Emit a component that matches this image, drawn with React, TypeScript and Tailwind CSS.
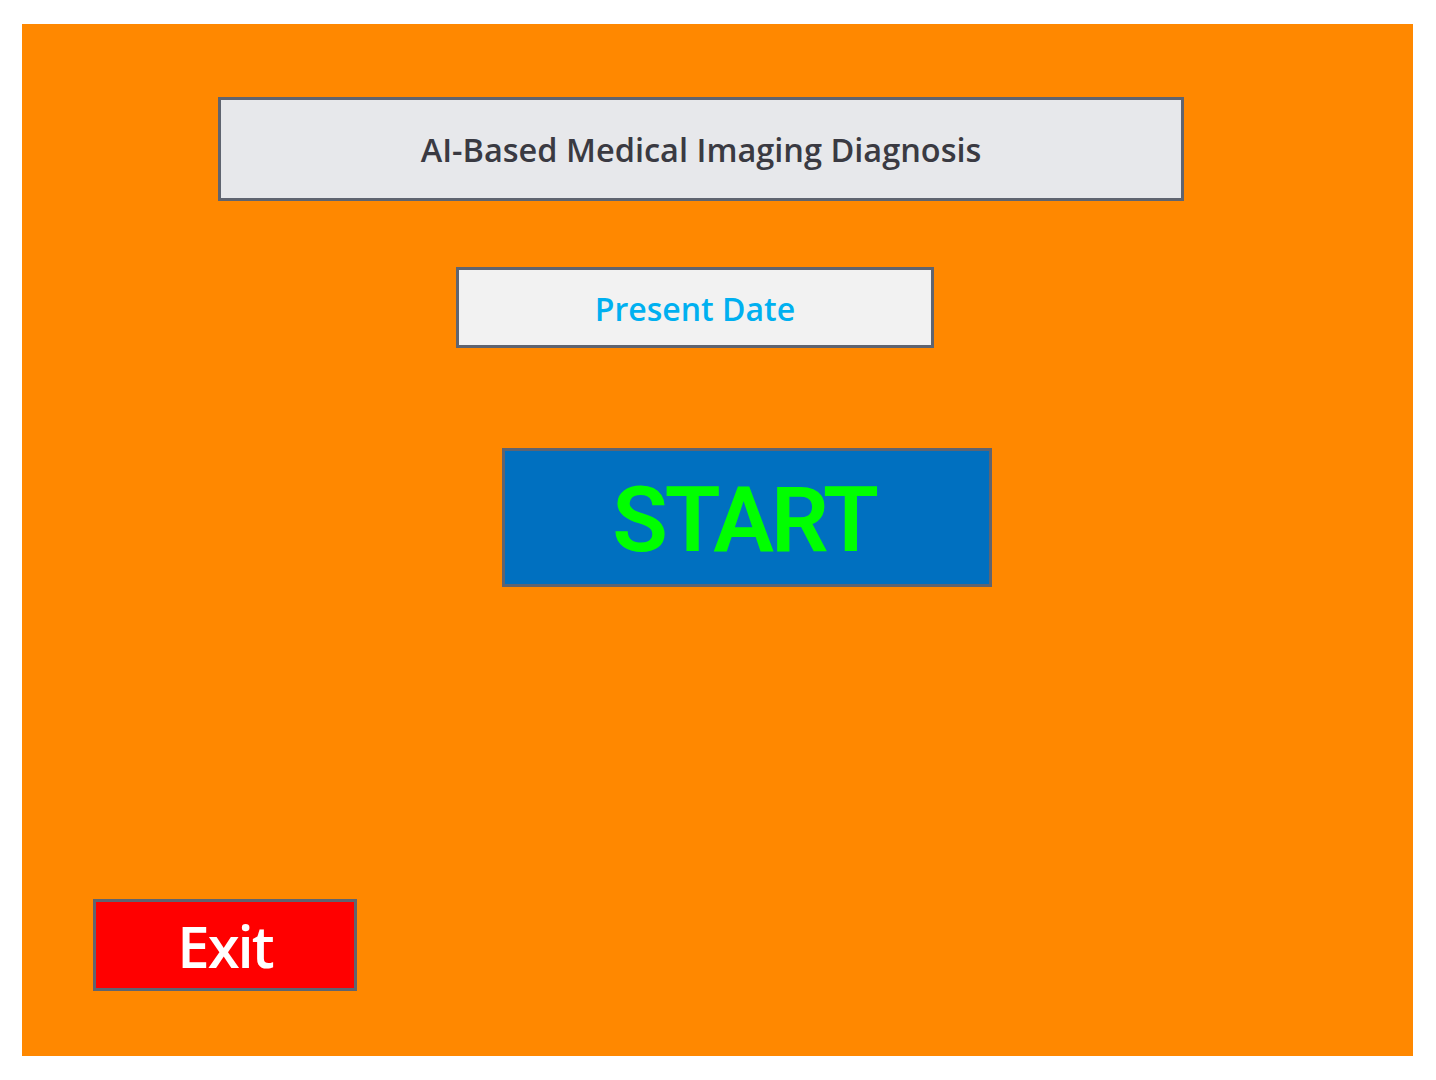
const App = () => {
  return (
    <div className="w-[1436px] h-[1080px] bg-white pt-[24px] pl-[22px]">
      <div className="w-[1391px] h-[1032px] bg-[#ff8800] flex flex-col items-start">
        <div className="ml-[196px] mt-[73px] w-[966px] h-[104px] bg-[#e7e8eb] border-[3px] border-[#5f6470] flex items-center justify-center pt-[3px]">
          <span className="font-['Open_Sans',sans-serif] text-[32.5px] font-semibold text-[#3a3a42]">
            AI-Based Medical Imaging Diagnosis
          </span>
        </div>
        <div className="ml-[434px] mt-[66px] w-[478px] h-[81px] bg-[#f2f2f2] border-[3px] border-[#5f6470] flex items-center justify-center pt-[3px]">
          <span className="font-['Open_Sans',sans-serif] text-[32px] font-semibold text-[#00b0f0]">
            Present Date
          </span>
        </div>
        <button className="ml-[480px] mt-[100px] w-[490px] h-[139px] bg-[#0070c0] border-[3px] border-[#5f6470] flex items-center justify-center pt-[6px] pr-[6px]">
          <span className="font-['Roboto',sans-serif] text-[91px] font-semibold tracking-[-3px] text-[#00ff00] leading-none">
            START
          </span>
        </button>
        <button className="ml-[71px] mt-[312px] w-[264px] h-[92px] bg-[#ff0000] border-[3px] border-[#5f6470] flex items-center justify-center pt-[2px]">
          <span className="font-['Open_Sans',sans-serif] text-[58px] font-semibold tracking-[-2px] text-white leading-none">
            Exit
          </span>
        </button>
      </div>
    </div>
  );
};

export default App;
